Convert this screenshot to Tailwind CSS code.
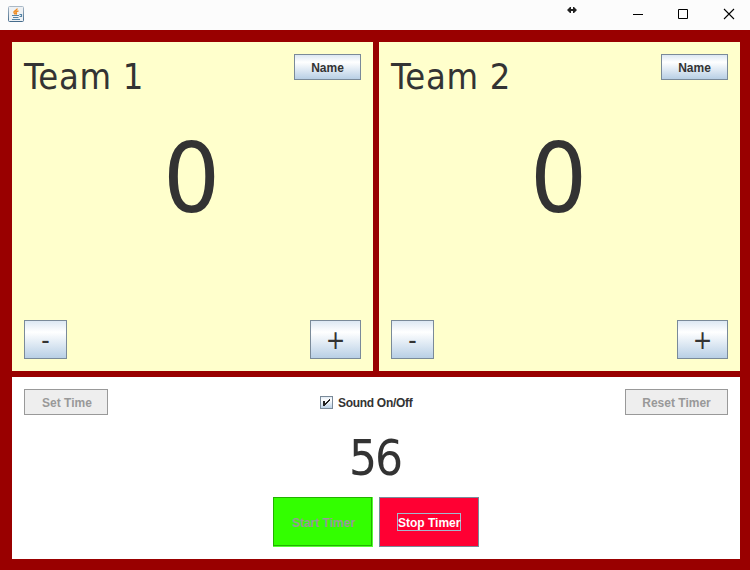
<!DOCTYPE html>
<html lang="en">
<head>
<meta charset="utf-8">
<title>Scoreboard</title>
<script src="https://cdn.jsdelivr.net/npm/@tailwindcss/browser@4"></script>
</head>
<body class="w-[750px] h-[570px] overflow-hidden flex flex-col bg-[#990000] text-[#333333] font-['Liberation_Sans',Arial,sans-serif] text-[12px] font-bold">
  <header class="h-[30px] shrink-0 bg-[#fcfcfc] flex justify-between">
    <svg class="ml-2 mt-1.5" width="16" height="16" viewBox="0 0 16 16" fill="none">
      <defs><linearGradient id="g" x1="0" y1="0" x2="0" y2="1"><stop offset="0" stop-color="#aab9c7"/><stop offset="1" stop-color="#456b8b"/></linearGradient></defs>
      <rect x=".5" y=".5" width="15" height="15" rx="1" fill="#eef1f4" stroke="url(#g)"/>
      <path d="M9 2.500C9.500 4.500 5.500 4.800 6 6.500C6.300 7.300 7 7.500 7.200 8.500M10.500 5C8 5.400 7.500 6 8.200 6.800C8.600 7.300 8.500 7.800 8 8.500" stroke="#ed8b22" stroke-width="1.500"/>
      <path d="M4 9.500H11M5 11.500H10.500M4 13.500H12M11.500 8.500H13.500V10.500H11.500" stroke="#5483a5" stroke-width="1.200"/>
    </svg>
    <div class="flex">
      <svg class="mt-[6px] mr-[56px]" width="10" height="8" viewBox="0 0 10 8"><path d="M0 4L3 1H4V3H6V1H7L10 4L7 7H6V5H4V7H3Z" fill="#222"/></svg>
      <svg class="mt-2" width="117" height="12" viewBox="0 0 117 12" fill="none" stroke="#000" stroke-width="1"><path d="M0 6.500H10M45.500 1.500H54.500V10.500H45.500Z"/><path d="M91 1L101 11M101 1L91 11" stroke-width="1.100"/></svg>
    </div>
  </header>
  <main class="flex-1 pt-3 pl-3 pr-2.5 pb-[11px] flex flex-col gap-1.5">
    <div class="flex gap-1.5 h-[329px]">
      <section class="w-[361px] bg-[#ffffcc] p-3 flex flex-col justify-between">
        <div class="flex justify-between h-[66px]">
          <h2 class="font-['DejaVu_Sans_Condensed','DejaVu_Sans',sans-serif] font-normal text-[36px] leading-[46px] tracking-[0.7px]">Team 1</h2>
          <button class="w-[67px] h-[26px] pt-px border border-[#7a8a99] bg-linear-to-b from-[#dde8f3] via-white via-30% to-[#b8cfe5]">Name</button>
        </div>
        <div class="font-['DejaVu_Sans_Condensed','DejaVu_Sans',sans-serif] font-normal text-[96px] leading-[120px] mb-[81px] -mt-px pr-[2px] text-center"><span class="inline-block scale-x-[1.04]">0</span></div>
        <div class="flex justify-between font-['DejaVu_Sans_Condensed','DejaVu_Sans',sans-serif] text-[26px]">
          <button class="w-[43px] h-[39px] leading-[36px] font-normal border border-[#7a8a99] bg-linear-to-b from-[#dde8f3] via-white via-30% to-[#b8cfe5]">-</button>
          <button class="w-[51px] h-[39px] leading-[36px] font-normal border border-[#7a8a99] bg-linear-to-b from-[#dde8f3] via-white via-30% to-[#b8cfe5]">+</button>
        </div>
      </section>
      <section class="w-[361px] bg-[#ffffcc] p-3 flex flex-col justify-between">
        <div class="flex justify-between h-[66px]">
          <h2 class="font-['DejaVu_Sans_Condensed','DejaVu_Sans',sans-serif] font-normal text-[36px] leading-[46px] tracking-[0.7px]">Team 2</h2>
          <button class="w-[67px] h-[26px] pt-px border border-[#7a8a99] bg-linear-to-b from-[#dde8f3] via-white via-30% to-[#b8cfe5]">Name</button>
        </div>
        <div class="font-['DejaVu_Sans_Condensed','DejaVu_Sans',sans-serif] font-normal text-[96px] leading-[120px] mb-[81px] -mt-px pr-[2px] text-center"><span class="inline-block scale-x-[1.04]">0</span></div>
        <div class="flex justify-between font-['DejaVu_Sans_Condensed','DejaVu_Sans',sans-serif] text-[26px]">
          <button class="w-[43px] h-[39px] leading-[36px] font-normal border border-[#7a8a99] bg-linear-to-b from-[#dde8f3] via-white via-30% to-[#b8cfe5]">-</button>
          <button class="w-[51px] h-[39px] leading-[36px] font-normal border border-[#7a8a99] bg-linear-to-b from-[#dde8f3] via-white via-30% to-[#b8cfe5]">+</button>
        </div>
      </section>
    </div>
    <section class="h-[182px] bg-white p-3 flex flex-col">
      <div class="flex justify-between">
        <button class="w-[84px] h-[26px] pt-px pl-[2px] border border-[#999999] bg-[#eeeeee] text-[#999999]">Set Time</button>
        <label class="flex items-center gap-[5px] mt-px ml-[2px]">
          <svg width="13" height="13" viewBox="0 0 13 13"><defs><linearGradient id="c" x1="0" y1="0" x2="0" y2="1"><stop offset="0" stop-color="#dde8f3"/><stop offset=".3" stop-color="#fff"/><stop offset="1" stop-color="#b8cfe5"/></linearGradient></defs><rect x=".5" y=".5" width="12" height="12" fill="url(#c)" stroke="#7a8a99"/><path d="M3 5H5V7H6V6H7V5H8V4H9V3H10V5H9V6H8V7H7V8H6V9H5V10H3Z" fill="#222"/></svg>
          <span class="w-[77px] tracking-[-0.300px] whitespace-nowrap">Sound On/Off</span>
        </label>
        <button class="w-[103px] h-[26px] pt-px border border-[#999999] bg-[#eeeeee] text-[#999999]">Reset Timer</button>
      </div>
      <div class="mt-[14px] mb-2 pr-[2px] font-['DejaVu_Sans_Condensed','DejaVu_Sans',sans-serif] font-normal text-[49px] leading-[60px] tracking-[-2px] text-center">56</div>
      <div class="flex justify-center gap-1.5">
        <button class="w-[100px] h-[50px] border-r border-b border-[#55ff33] bg-[#33ff00] text-[#999999] flex"><span class="flex-1 h-full pt-[3px] pl-[2px] border border-[#22b200] flex items-center justify-center">Start Timer</span></button>
        <button class="w-[100px] h-[50px] border border-[#7a8a99] bg-[#ff0033] text-white flex items-center justify-center"><span class="w-[64px] h-[18px] leading-[18px] border border-[#a3b8cc] whitespace-nowrap">Stop Timer</span></button>
      </div>
    </section>
  </main>
</body>
</html>
